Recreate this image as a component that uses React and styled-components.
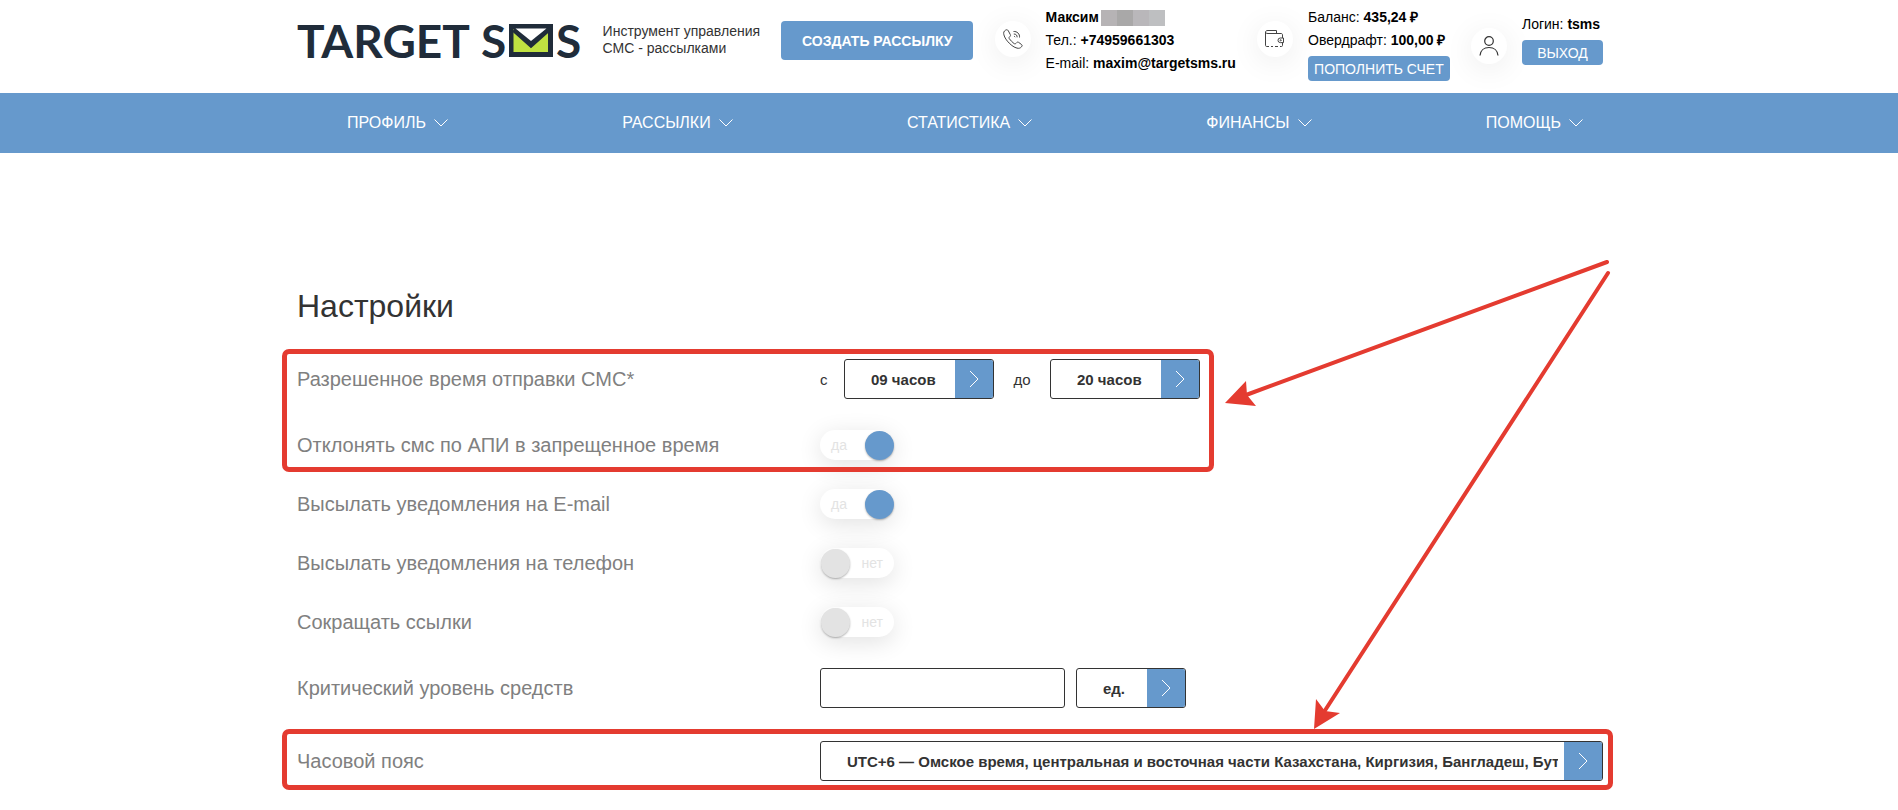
import React, { useState } from 'react';
import { styled, createGlobalStyle } from 'styled-components';

const MENU = ['ПРОФИЛЬ', 'РАССЫЛКИ', 'СТАТИСТИКА', 'ФИНАНСЫ', 'ПОМОЩЬ'];

const Chevron = () => (
  <svg width="14" height="8" viewBox="0 0 14 8" fill="none" stroke="#fff" aria-hidden="true">
    <path d="M0.5 0.5 7 7 13.5 0.5" />
  </svg>
);

const PhoneIcon = () => (
  <svg width="20" height="20" viewBox="0 0 20 20" fill="none" stroke="#444" strokeWidth="1" aria-hidden="true">
    <path d="M2.500 1.200C.8 2.200.3 3.700.9 5.800c.8 3 2.700 5.700 5.300 8.300 2.500 2.500 5 4.300 7.800 5 1.800.5 3.300.1 4.500-1.300.9-1 .8-1.700 0-2.300l-2.700-2c-.8-.6-1.500-.5-2.100.1l-.8.8c-.6.6-1.200.6-1.900.1-1.700-1.300-3.300-2.900-4.600-4.700-.5-.7-.5-1.300.1-1.900l.6-.6c.5-.6.6-1.200.1-1.900L5.200 1.600c-.7-1-1.600-1.100-2.700-.4z" />
    <path d="M10.500 2.500c3.500-.4 6.500 2.500 6 6M10.800 5c2.100-.1 3.500 1.300 3.300 3.300M11.200 7.200l1 .9" />
  </svg>
);

const WalletIcon = () => (
  <svg width="20" height="18" viewBox="0 0 20 18" fill="none" stroke="#444" aria-hidden="true">
    <path d="M11.500 3.500v-3H3C1.500.5.5 1 .5 2s1 1.500 2.500 1.500h13c1 0 1.500.5 1.500 1.500v3M.5 2v13.300c0 .8.5 1.200 1.200 1.200H4M17.500 12.500v3c0 .6-.4 1-1 1H15" />
    <path d="M6 16.500h2M10 16.500h3" />
    <path d="M18.500 8h-3.200a2.300 2.300 0 0 0 0 4.600h3.200z" />
    <circle cx="15.700" cy="10.300" r="0.6" />
  </svg>
);

const UserIcon = () => (
  <svg width="20" height="20" viewBox="0 0 20 20" fill="none" stroke="#333" strokeWidth="1.2" aria-hidden="true">
    <circle cx="10" cy="5" r="4.300" />
    <path d="M1 19.500c.4-5 4-8 9-8s8.600 3 9 8" />
  </svg>
);

const EnvelopeIcon = () => (
  <svg width="44" height="33" viewBox="0 0 44 33" aria-hidden="true">
    <path d="M0 0h44v33H0z" fill="#202c3a" />
    <path d="M4.500 5v23h34.500V5L22 20z" fill="#c0e241" />
    <path d="M6.500 4.500h31L22 17z" fill="#fff" />
    <path d="M4.500 6 22 21.500 39.500 6" fill="none" stroke="#202c3a" strokeWidth="4" />
  </svg>
);

const SelectField = ({ label, children, width }) => (
  <SelectBox $width={width}>
    <Select aria-label={label}>{children}</Select>
    <SelectArrow>
      <svg width="10" height="18" viewBox="0 0 10 18" fill="none" stroke="#fff" aria-hidden="true">
        <path d="M1 1l8 8-8 8" />
      </svg>
    </SelectArrow>
  </SelectBox>
);

const ToggleRow = ({ id, label, initial }) => {
  const [on, setOn] = useState(initial);

  return (
    <Row>
      <Label htmlFor={id}>{label}</Label>
      <Toggle $on={on}>
        <ToggleInput id={id} type="checkbox" checked={on} onChange={e => setOn(e.target.checked)} />
        {on ? 'да' : 'нет'}
        <Knob $on={on} />
      </Toggle>
    </Row>
  );
};

const App = () => {
  return (
    <>
      <GlobalStyle />
      <Header>
        <Logo href="#">
          <span>TARGET</span>
          <LogoTail>
            <span>S</span>
            <EnvelopeIcon />
            <span>S</span>
          </LogoTail>
        </Logo>
        <Tagline>
          Инструмент управления
          <br />
          СМС - рассылками
        </Tagline>
        <CreateButton>СОЗДАТЬ РАССЫЛКУ</CreateButton>
        <Contact $top="6px">
          <IconCircle $top="15px">
            <PhoneIcon />
          </IconCircle>
          <ContactLines>
            <NameLine>
              <b>Максим</b>
              <HiddenName />
            </NameLine>
            <Line>
              Тел.: <b>+74959661303</b>
            </Line>
            <Line>
              E-mail: <b>maxim@targetsms.ru</b>
            </Line>
          </ContactLines>
        </Contact>
        <Contact $top="6px">
          <IconCircle $top="15px">
            <WalletIcon />
          </IconCircle>
          <ContactLines>
            <Line>
              Баланс: <b>435,24 ₽</b>
            </Line>
            <Line>
              Овердрафт: <b>100,00 ₽</b>
            </Line>
            <SmallButton>ПОПОЛНИТЬ СЧЕТ</SmallButton>
          </ContactLines>
        </Contact>
        <Contact $top="13px">
          <IconCircle $top="15px">
            <UserIcon />
          </IconCircle>
          <ContactLines>
            <Line>
              Логин: <b>tsms</b>
            </Line>
            <SmallButton>ВЫХОД</SmallButton>
          </ContactLines>
        </Contact>
      </Header>
      <Nav>
        <NavList>
          {MENU.map(name => (
            <NavLink href="#" key={name}>
              {name}
              <Chevron />
            </NavLink>
          ))}
        </NavList>
      </Nav>
      <Main>
        <Title>Настройки</Title>
        <Form>
          <Group>
            <Row $field>
              <Label as="span">Разрешенное время отправки СМС*</Label>
              <Controls>
                <Word>с</Word>
                <SelectField label="Разрешенное время, с" width="150px">
                  <option>09 часов</option>
                </SelectField>
                <Word $next>до</Word>
                <SelectField label="Разрешенное время, до" width="150px">
                  <option>20 часов</option>
                </SelectField>
              </Controls>
            </Row>
            <ToggleRow id="reject" label="Отклонять смс по АПИ в запрещенное время" initial />
            <TimeHighlight />
          </Group>
          <ToggleRow id="email" label="Высылать уведомления на E-mail" initial />
          <ToggleRow id="phone" label="Высылать уведомления на телефон" initial={false} />
          <ToggleRow id="links" label="Сокращать ссылки" initial={false} />
          <Row $field>
            <Label htmlFor="level">Критический уровень средств</Label>
            <Controls>
              <TextInput id="level" type="text" />
              <SelectField label="Единица" width="110px">
                <option>ед.</option>
              </SelectField>
            </Controls>
          </Row>
          <Group>
            <Row $field>
              <Label as="span">Часовой пояс</Label>
              <SelectField label="Часовой пояс" width="100%">
                <option>
                  UTC+6 — Омское время, центральная и восточная части Казахстана, Киргизия, Бангладеш, Бутан
                </option>
              </SelectField>
            </Row>
            <ZoneHighlight />
          </Group>
        </Form>
        <Arrows width="400" height="480" viewBox="0 0 400 480" aria-hidden="true">
          <path d="M391 7 30 140M392 18 108 457" fill="none" stroke="#e43b30" strokeWidth="4" strokeLinecap="round" />
          <path d="M9 148 30 126 31 140 40 151zM98 474 100 444 109 456 124 458z" fill="#e43b30" />
        </Arrows>
      </Main>
    </>
  );
};

export default App;

const GlobalStyle = createGlobalStyle`
  * {
    box-sizing: border-box;
  }
  body {
    margin: 0;
    background-color: #fff;
    color: #333;
    font-family: 'Liberation Sans', Arial, sans-serif;
    font-size: 14px;
  }
  button, input, select {
    font-family: inherit;
  }
`;
const Header = styled.header`
  display: flex;
  justify-content: space-between;
  max-width: 1308px;
  height: 93px;
  margin: 0 auto;
  padding-left: 2px;
`;
const Logo = styled.a`
  display: flex;
  align-items: center;
  gap: 11px;
  height: 81px;
  color: #202c3a;
  font-family: Lato, sans-serif;
  font-size: 46px;
  font-weight: 700;
  line-height: 46px;
  text-decoration: none;
`;
const LogoTail = styled.span`
  display: flex;
  align-items: center;
  gap: 3px;
`;
const Tagline = styled.p`
  margin: 0;
  padding-top: 23px;
  line-height: 17px;
  white-space: nowrap;
`;
const CreateButton = styled.button`
  width: 192px;
  height: 39px;
  margin-top: 21px;
  padding: 0;
  border: 0;
  border-radius: 4px;
  background-color: #6699cc;
  color: #fff;
  font-size: 14px;
  font-weight: 700;
  white-space: nowrap;
  cursor: pointer;
`;
const Contact = styled.div`
  display: flex;
  align-items: flex-start;
  gap: 15px;
  padding-top: ${({ $top }) => $top};
  color: #000;
`;
const IconCircle = styled.span`
  display: flex;
  align-items: center;
  justify-content: center;
  width: 36px;
  height: 36px;
  margin-top: ${({ $top }) => $top};
  border-radius: 50%;
  background-color: #fff;
  box-shadow: 0 5px 30px rgba(0, 0, 0, 0.08);
`;
const ContactLines = styled.div`
  display: flex;
  flex-direction: column;
`;
const Line = styled.div`
  line-height: 23px;
  white-space: nowrap;
`;
const NameLine = styled(Line)`
  display: flex;
  align-items: center;
  gap: 2px;
`;
const HiddenName = styled.span`
  width: 64px;
  height: 16px;
  background: linear-gradient(90deg, #b6b3b5 25%, #a9a8a8 25% 50%, #b9b7ba 50% 75%, #bebfc1 75%);
`;
const SmallButton = styled.button`
  min-width: 81px;
  height: 25px;
  margin-top: 4px;
  padding: 0 6px;
  border: 0;
  border-radius: 4px;
  background-color: #6699cc;
  color: #fff;
  font-size: 14px;
  white-space: nowrap;
  cursor: pointer;
`;
const Nav = styled.nav`
  background-color: #6699cc;
`;
const NavList = styled.div`
  display: flex;
  align-items: center;
  justify-content: space-between;
  max-width: 1308px;
  height: 60px;
  margin: 0 auto;
  padding: 0 20px 0 52px;
`;
const NavLink = styled.a`
  display: flex;
  align-items: center;
  gap: 8px;
  color: #fff;
  font-size: 16px;
  text-decoration: none;
`;
const Main = styled.main`
  position: relative;
  max-width: 1308px;
  margin: 0 auto;
  padding: 134px 0 27px 2px;
`;
const Title = styled.h1`
  margin: 0 0 32px;
  font-size: 32px;
  font-weight: 400;
  line-height: 38px;
`;
const Form = styled.form`
  display: flex;
  flex-direction: column;
  gap: 29px;
`;
const Group = styled.div`
  position: relative;
  display: flex;
  flex-direction: column;
  gap: 29px;
`;
const Row = styled.div`
  display: grid;
  grid-template-columns: 523px 1fr;
  align-items: center;
  height: ${({ $field }) => ($field ? '44px' : '30px')};
`;
const Label = styled.label`
  color: #808080;
  font-size: 20px;
  line-height: 24px;
`;
const Controls = styled.div`
  display: flex;
  align-items: center;
  gap: 11px;
`;
const Word = styled.span`
  width: ${({ $next }) => ($next ? '34px' : '13px')};
  font-size: 15px;
  text-align: ${({ $next }) => ($next ? 'center' : 'left')};
`;
const SelectBox = styled.span`
  position: relative;
  display: block;
  width: ${({ $width }) => $width};
  height: 40px;
`;
const Select = styled.select`
  width: 100%;
  height: 40px;
  padding: 0 44px 0 26px;
  border: 1px solid #333;
  border-radius: 3px;
  appearance: none;
  background-color: #fff;
  color: #333;
  font-size: 15px;
  font-weight: 700;
`;
const SelectArrow = styled.span`
  position: absolute;
  top: 1px;
  right: 1px;
  display: flex;
  align-items: center;
  justify-content: center;
  width: 38px;
  height: 38px;
  border-radius: 0 2px 2px 0;
  background-color: #6699cc;
  pointer-events: none;
`;
const TextInput = styled.input`
  width: 245px;
  height: 40px;
  padding: 0 12px;
  border: 1px solid #333;
  border-radius: 3px;
  font-size: 15px;
`;
const Toggle = styled.span`
  position: relative;
  display: flex;
  align-items: center;
  justify-content: ${({ $on }) => ($on ? 'flex-start' : 'flex-end')};
  width: 74px;
  height: 30px;
  padding: 0 11px;
  border-radius: 15px;
  background-color: #fff;
  color: #e3e3e3;
  box-shadow: 0 5px 25px rgba(0, 0, 0, 0.12);
`;
const ToggleInput = styled.input`
  position: absolute;
  inset: 0;
  z-index: 1;
  width: 100%;
  height: 100%;
  margin: 0;
  opacity: 0;
  cursor: pointer;
`;
const Knob = styled.span`
  position: absolute;
  top: 1px;
  left: ${({ $on }) => ($on ? '45px' : '1px')};
  width: 29px;
  height: 29px;
  border-radius: 50%;
  background-color: ${({ $on }) => ($on ? '#6699cc' : '#e3e3e3')};
  box-shadow: 0 1px 2px rgba(0, 0, 0, 0.3);
`;
const Highlight = styled.div`
  position: absolute;
  border: 5px solid #e43b30;
  border-radius: 7px;
  pointer-events: none;
`;
const TimeHighlight = styled(Highlight)`
  top: -8px;
  bottom: -12px;
  left: -15px;
  width: 932px;
`;
const ZoneHighlight = styled(Highlight)`
  top: -10px;
  right: -10px;
  bottom: -7px;
  left: -15px;
`;
const Arrows = styled.svg`
  position: absolute;
  top: 102px;
  left: 921px;
  pointer-events: none;
`;
